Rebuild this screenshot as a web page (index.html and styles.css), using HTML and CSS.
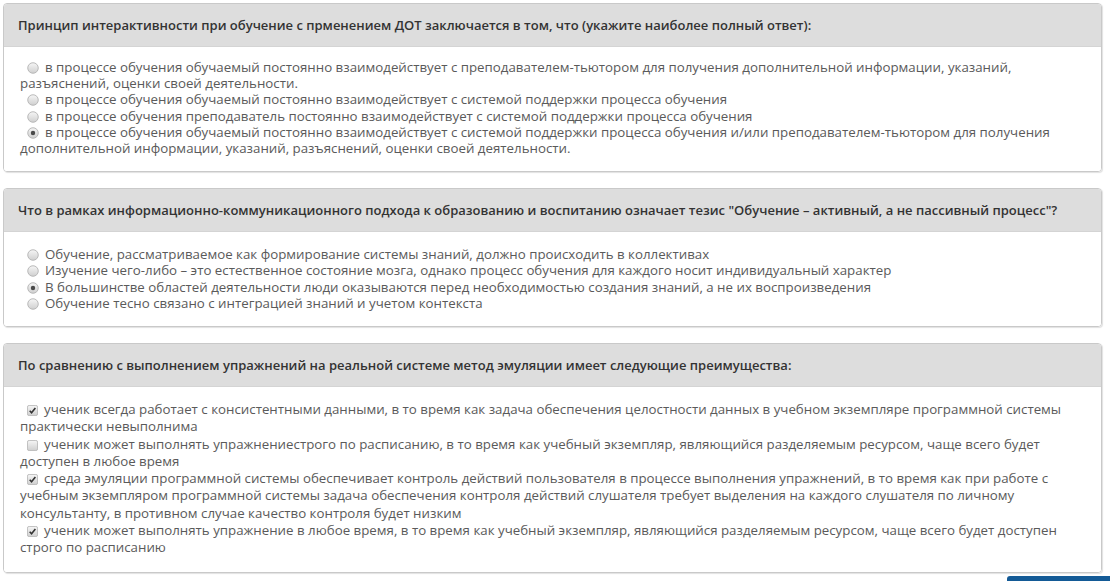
FILE: index.html
```html
<!DOCTYPE html>
<html lang="ru">
<head>
<meta charset="utf-8">
<title>Тест</title>
<link rel="stylesheet" href="styles.css">
</head>
<body>
<svg width="0" height="0" class="defs" aria-hidden="true">
  <defs>
    <linearGradient id="g" x1="0" y1="0" x2="0" y2="1">
      <stop offset="0" stop-color="#f6f6f6"/>
      <stop offset="1" stop-color="#cfcfcf"/>
    </linearGradient>
  </defs>
</svg>
<div class="page">
  <section class="panel">
    <div class="panel-head">Принцип интерактивности при обучение с прменением ДОТ заключается в том, что (укажите наиболее полный ответ):</div>
    <div class="panel-body radios first">
      <div class="opt"><svg class="ctl" viewBox="0 0 13 13"><circle cx="6.5" cy="6.5" r="5.7" fill="url(#g)" stroke="#b4b4b4"/></svg>в процессе обучения обучаемый постоянно взаимодействует с преподавателем-тьютором для получения дополнительной информации, указаний, разъяснений, оценки своей деятельности.</div>
      <div class="opt"><svg class="ctl" viewBox="0 0 13 13"><circle cx="6.5" cy="6.5" r="5.7" fill="url(#g)" stroke="#b4b4b4"/></svg>в процессе обучения обучаемый постоянно взаимодействует с системой поддержки процесса обучения</div>
      <div class="opt"><svg class="ctl" viewBox="0 0 13 13"><circle cx="6.5" cy="6.5" r="5.7" fill="url(#g)" stroke="#b4b4b4"/></svg>в процессе обучения преподаватель постоянно взаимодействует с системой поддержки процесса обучения</div>
      <div class="opt"><svg class="ctl" viewBox="0 0 13 13"><circle cx="6.5" cy="6.5" r="5.7" fill="url(#g)" stroke="#b4b4b4"/><circle cx="6.5" cy="6.5" r="2.4" fill="#4a4a4a"/></svg>в процессе обучения обучаемый постоянно взаимодействует с системой поддержки процесса обучения и/или преподавателем-тьютором для получения дополнительной информации, указаний, разъяснений, оценки своей деятельности.</div>
    </div>
  </section>

  <section class="panel">
    <div class="panel-head">Что в рамках информационно-коммуникационного подхода к образованию и воспитанию означает тезис "Обучение – активный, а не пассивный процесс"?</div>
    <div class="panel-body radios">
      <div class="opt"><svg class="ctl" viewBox="0 0 13 13"><circle cx="6.5" cy="6.5" r="5.7" fill="url(#g)" stroke="#b4b4b4"/></svg>Обучение, рассматриваемое как формирование системы знаний, должно происходить в коллективах</div>
      <div class="opt"><svg class="ctl" viewBox="0 0 13 13"><circle cx="6.5" cy="6.5" r="5.7" fill="url(#g)" stroke="#b4b4b4"/></svg>Изучение чего-либо – это естественное состояние мозга, однако процесс обучения для каждого носит индивидуальный характер</div>
      <div class="opt"><svg class="ctl" viewBox="0 0 13 13"><circle cx="6.5" cy="6.5" r="5.7" fill="url(#g)" stroke="#b4b4b4"/><circle cx="6.5" cy="6.5" r="2.4" fill="#4a4a4a"/></svg>В большинстве областей деятельности люди оказываются перед необходимостью создания знаний, а не их воспроизведения</div>
      <div class="opt"><svg class="ctl" viewBox="0 0 13 13"><circle cx="6.5" cy="6.5" r="5.7" fill="url(#g)" stroke="#b4b4b4"/></svg>Обучение тесно связано с интеграцией знаний и учетом контекста</div>
    </div>
  </section>

  <section class="panel">
    <div class="panel-head">По сравнению с выполнением упражнений на реальной системе метод эмуляции имеет следующие преимущества:</div>
    <div class="panel-body checks">
      <div class="opt"><svg class="ctl box" viewBox="0 0 13 13"><rect x="0.5" y="0.5" width="12" height="12" rx="2" fill="url(#g)" stroke="#b4b4b4"/><path d="M3.2 6.8 L5.4 9.2 L9.9 3.6" fill="none" stroke="#333" stroke-width="1.9"/></svg>ученик всегда работает с консистентными данными, в то время как задача обеспечения целостности данных в учебном экземпляре программной системы практически невыполнима</div>
      <div class="opt"><svg class="ctl box" viewBox="0 0 13 13"><rect x="0.5" y="0.5" width="12" height="12" rx="2" fill="url(#g)" stroke="#b4b4b4"/></svg>ученик может выполнять упражнениестрого по расписанию, в то время как учебный экземпляр, являющийся разделяемым ресурсом, чаще всего будет доступен в любое время</div>
      <div class="opt"><svg class="ctl box" viewBox="0 0 13 13"><rect x="0.5" y="0.5" width="12" height="12" rx="2" fill="url(#g)" stroke="#b4b4b4"/><path d="M3.2 6.8 L5.4 9.2 L9.9 3.6" fill="none" stroke="#333" stroke-width="1.9"/></svg>среда эмуляции программной системы обеспечивает контроль действий пользователя в процессе выполнения упражнений, в то время как при работе с учебным экземпляром программной системы задача обеспечения контроля действий слушателя требует выделения на каждого слушателя по личному консультанту, в противном случае качество контроля будет низким</div>
      <div class="opt"><svg class="ctl box" viewBox="0 0 13 13"><rect x="0.5" y="0.5" width="12" height="12" rx="2" fill="url(#g)" stroke="#b4b4b4"/><path d="M3.2 6.8 L5.4 9.2 L9.9 3.6" fill="none" stroke="#333" stroke-width="1.9"/></svg>ученик может выполнять упражнение в любое время, в то время как учебный экземпляр, являющийся разделяемым ресурсом, чаще всего будет доступен строго по расписанию</div>
    </div>
  </section>

  <div class="actions"><button class="btn" type="button">Завершить</button></div>
</div>
</body>
</html>
```

FILE: styles.css
```css
html, body {
  margin: 0;
  padding: 0;
  background: #fff;
}
body {
  font-family: "Open Sans", "Liberation Sans", sans-serif;
  overflow: hidden;
}
.defs {
  position: absolute;
  width: 0;
  height: 0;
}
.page {
  width: 1110px;
  padding: 3px 8px 0 3px;
  box-sizing: border-box;
}
.panel {
  border: 1px solid #c9c9c9;
  border-radius: 4px;
  box-shadow: 1px 1px 1px rgba(0, 0, 0, 0.12);
  margin-bottom: 16px;
  overflow: hidden;
}
.panel-head {
  background: #dddddd;
  color: #333;
  font-weight: 600;
  font-size: 13px;
  height: 42px;
  line-height: 42px;
  padding: 0 14px;
  white-space: nowrap;
  border-bottom: 1px solid #d4d4d4;
}
.panel-body {
  background: #fff;
  color: #5a5a5a;
  font-size: 13.3px;
  padding-left: 16px;
  padding-right: 14px;
}
.radios {
  line-height: 16.2px;
  padding-top: 14px;
  padding-bottom: 15px;
}
.radios.first {
  padding-top: 12px;
  padding-bottom: 15px;
}
.checks {
  line-height: 17.25px;
  padding-top: 14px;
  padding-bottom: 16px;
}
.ctl {
  width: 12px;
  height: 12px;
  margin: 0 6px 0 7px;
  vertical-align: -2px;
}
.box {
  width: 11px;
  height: 11px;
}
.actions {
  display: flex;
  justify-content: flex-end;
  margin-right: -8px;
  margin-top: -13px;
}
.btn {
  width: 103px;
  height: 34px;
  background: #135a96;
  border: none;
  border-radius: 3px 0 0 0;
  color: #fff;
  font-family: inherit;
  font-size: 14px;
}
```
